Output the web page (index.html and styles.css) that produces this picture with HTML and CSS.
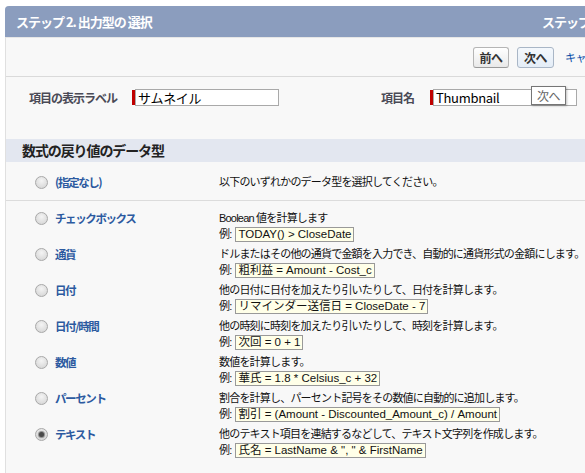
FILE: index.html
```html
<!DOCTYPE html>
<html lang="ja">
<head>
<meta charset="utf-8">
<title>ステップ 2. 出力型の選択</title>
<link rel="stylesheet" href="styles.css">
</head>
<body>
<div class="panel">
  <div class="hdr">
    <h2 class="hdr-title">ステップ 2. 出力型の 選択</h2>
    <span class="hdr-step">ステップ 2 / 4</span>
  </div>
  <div class="btnbar">
    <button class="btn">前へ</button>
    <button class="btn btn-hl">次へ</button>
    <a class="cancel" href="#">キャンセル</a>
  </div>
  <div class="fields">
    <label class="flabel flabel-1">項目の表示ラベル</label>
    <div class="req"><span class="req-bar"></span><input class="inp" value="サムネイル"></div>
    <label class="flabel flabel-2">項目名</label>
    <div class="req"><span class="req-bar"></span><input class="inp" value="Thumbnail"></div>
  </div>
  <div class="tooltip">次へ</div>
  <div class="sec-title">数式の戻り値のデータ型</div>
  <div class="opts">
    <div class="opt opt-first">
      <span class="radio"></span>
      <span class="olabel">(指定なし)</span>
      <div class="desc"><div class="line">以下のいずれかのデータ型を選択してください。</div></div>
    </div>
    <div class="opt">
      <span class="radio"></span>
      <span class="olabel">チェックボックス</span>
      <div class="desc">
        <div class="line">Boolean 値を計算します</div>
        <div class="line">例: <span class="ex">TODAY() &gt; CloseDate</span></div>
      </div>
    </div>
    <div class="opt">
      <span class="radio"></span>
      <span class="olabel">通貨</span>
      <div class="desc">
        <div class="line">ドルまたはその他の通貨で金額を入力でき、自動的に通貨形式の金額にします。</div>
        <div class="line">例: <span class="ex">粗利益 = Amount - Cost_c</span></div>
      </div>
    </div>
    <div class="opt">
      <span class="radio"></span>
      <span class="olabel">日付</span>
      <div class="desc">
        <div class="line">他の日付に日付を加えたり引いたりして、日付を計算します。</div>
        <div class="line">例: <span class="ex">リマインダー送信日 = CloseDate - 7</span></div>
      </div>
    </div>
    <div class="opt">
      <span class="radio"></span>
      <span class="olabel">日付/時間</span>
      <div class="desc">
        <div class="line">他の時刻に時刻を加えたり引いたりして、時刻を計算します。</div>
        <div class="line">例: <span class="ex">次回 = 0 + 1</span></div>
      </div>
    </div>
    <div class="opt">
      <span class="radio"></span>
      <span class="olabel">数値</span>
      <div class="desc">
        <div class="line">数値を計算します。</div>
        <div class="line">例: <span class="ex">華氏 = 1.8 * Celsius_c + 32</span></div>
      </div>
    </div>
    <div class="opt">
      <span class="radio"></span>
      <span class="olabel">パーセント</span>
      <div class="desc">
        <div class="line">割合を計算し、パーセント記号をその数値に自動的に追加します。</div>
        <div class="line">例: <span class="ex">割引 = (Amount - Discounted_Amount_c) / Amount</span></div>
      </div>
    </div>
    <div class="opt">
      <span class="radio radio-on"></span>
      <span class="olabel">テキスト</span>
      <div class="desc">
        <div class="line">他のテキスト項目を連結するなどして、テキスト文字列を作成します。</div>
        <div class="line">例: <span class="ex">氏名 = LastName &amp; ", " &amp; FirstName</span></div>
      </div>
    </div>
  </div>
</div>
</body>
</html>
```

FILE: styles.css
```css
html, body {
  margin: 0;
  padding: 0;
  background: #ffffff;
  overflow: hidden;
}
body {
  width: 585px;
  height: 473px;
  font-family: "Liberation Sans", "Noto Sans CJK JP", sans-serif;
  font-size: 12px;
  color: #222;
}
.panel {
  position: relative;
  margin: 6px 0 0 5px;
  width: 700px;
  height: 480px;
  background: #f8f8f8;
  border-left: 1px solid #e0e0e0;
  border-radius: 4px 0 0 0;
  box-sizing: border-box;
}
.hdr {
  display: grid;
  grid-template-columns: 526px auto;
  align-items: center;
  height: 31px;
  padding-left: 11px;
  background: #8b9dbe;
  border-radius: 4px 0 0 0;
  margin-left: -1px;
}
.hdr-title, .hdr-step {
  margin: 0;
  font-family: "Noto Sans CJK JP", sans-serif;
  font-size: 13px;
  font-weight: bold;
  color: #ffffff;
  letter-spacing: -1px;
  white-space: pre;
}
.btnbar {
  display: flex;
  align-items: center;
  height: 40px;
  padding-left: 467px;
  border-top: 1px solid #e6e6e6;
  border-bottom: 1px solid #dadada;
  box-sizing: border-box;
}
.btn {
  height: 21px;
  width: 36px;
  padding: 0;
  margin: 0 8px 0 0;
  font-family: "Noto Sans CJK JP", sans-serif;
  font-size: 12px;
  font-weight: bold;
  color: #333;
  letter-spacing: -0.5px;
  background: linear-gradient(#ffffff, #e9e9e9);
  border: 1px solid #b5b5b5;
  border-bottom-color: #9a9a9a;
  border-radius: 3px;
  line-height: 17px;
}
.btn-hl {
  width: 37px;
  margin-right: 11px;
  background: linear-gradient(#f4f8fc, #e4edf7);
  border-color: #a9b6c6;
}
.cancel {
  font-family: "Noto Sans CJK JP", sans-serif;
  font-size: 11px;
  color: #0a4fa8;
  text-decoration: none;
  white-space: nowrap;
  letter-spacing: -0.5px;
}
.fields {
  display: flex;
  align-items: flex-start;
  height: 62px;
  padding: 12px 0 0 23px;
  box-sizing: border-box;
}
.flabel {
  font-family: "Noto Sans CJK JP", sans-serif;
  font-size: 12px;
  font-weight: bold;
  color: #4a4a56;
  line-height: 17px;
  letter-spacing: -1px;
  white-space: nowrap;
}
.flabel-1 { width: 103px; }
.flabel-2 {
  width: 151px;
  text-align: right;
  padding-right: 16px;
  box-sizing: border-box;
}
.req {
  display: flex;
  align-items: stretch;
  height: 17px;
}
.req-bar {
  width: 3px;
  background: #c00000;
  margin: 1px 0;
}
.inp {
  width: 144px;
  height: 17px;
  margin: 0;
  padding: 0 2px;
  border: 1px solid #a9a9a9;
  background: #fff;
  font-family: "Noto Sans CJK JP", sans-serif;
  font-size: 13px;
  color: #000;
  box-sizing: border-box;
  letter-spacing: -0.3px;
}
.tooltip {
  position: absolute;
  left: 525px;
  top: 80px;
  width: 35px;
  height: 19px;
  box-sizing: border-box;
  background: #fff;
  border: 1px solid #767676;
  box-shadow: 1px 1px 2px rgba(0,0,0,0.25);
  font-family: "Noto Sans CJK JP", sans-serif;
  font-size: 12px;
  color: #666;
  line-height: 17px;
  text-align: center;
  letter-spacing: -0.5px;
}
.sec-title {
  height: 23px;
  line-height: 23px;
  padding-left: 16px;
  background: #e3e7f0;
  font-family: "Noto Sans CJK JP", sans-serif;
  font-size: 14px;
  font-weight: bold;
  color: #222;
  letter-spacing: -1.1px;
}
.opts {
  display: flex;
  flex-direction: column;
  gap: 4px;
  padding-left: 29px;
}
.opt {
  display: grid;
  grid-template-columns: 20px 164px 1fr;
  align-items: start;
}
.opt-first {
  margin-left: -29px;
  padding: 12px 0 10px 29px;
  border-bottom: 1px solid #dcdcdc;
  margin-bottom: 5px;
}
.radio {
  width: 13px;
  height: 13px;
  margin-top: 2px;
  border-radius: 50%;
  box-sizing: border-box;
  border: 1px solid #a8a8a8;
  background: radial-gradient(circle at 50% 35%, #f4f4f4 0%, #dadada 75%, #cfcfcf 100%);
  display: flex;
  align-items: center;
  justify-content: center;
}
.radio-on::after {
  content: "";
  width: 5px;
  height: 5px;
  border-radius: 50%;
  background: #4a4a4a;
  box-shadow: 0 0 1px 1px #888;
}
.olabel {
  font-family: "Noto Sans CJK JP", sans-serif;
  font-size: 11.5px;
  font-weight: bold;
  color: #2c5aa0;
  line-height: 16px;
  letter-spacing: -1.4px;
  white-space: nowrap;
}
.desc {
  display: flex;
  flex-direction: column;
}
.line {
  height: 16px;
  line-height: 16px;
  font-family: "Liberation Sans", "Noto Sans CJK JP", sans-serif;
  font-size: 11px;
  color: #111;
  letter-spacing: -0.8px;
  white-space: nowrap;
  display: flex;
  align-items: center;
}
.ex {
  display: inline-block;
  margin-left: 4px;
  height: 15px;
  line-height: 13px;
  padding: 0 2px;
  box-sizing: border-box;
  background: #ffffe8;
  border: 1px solid #999;
  font-size: 11.5px;
  letter-spacing: 0;
}
```
